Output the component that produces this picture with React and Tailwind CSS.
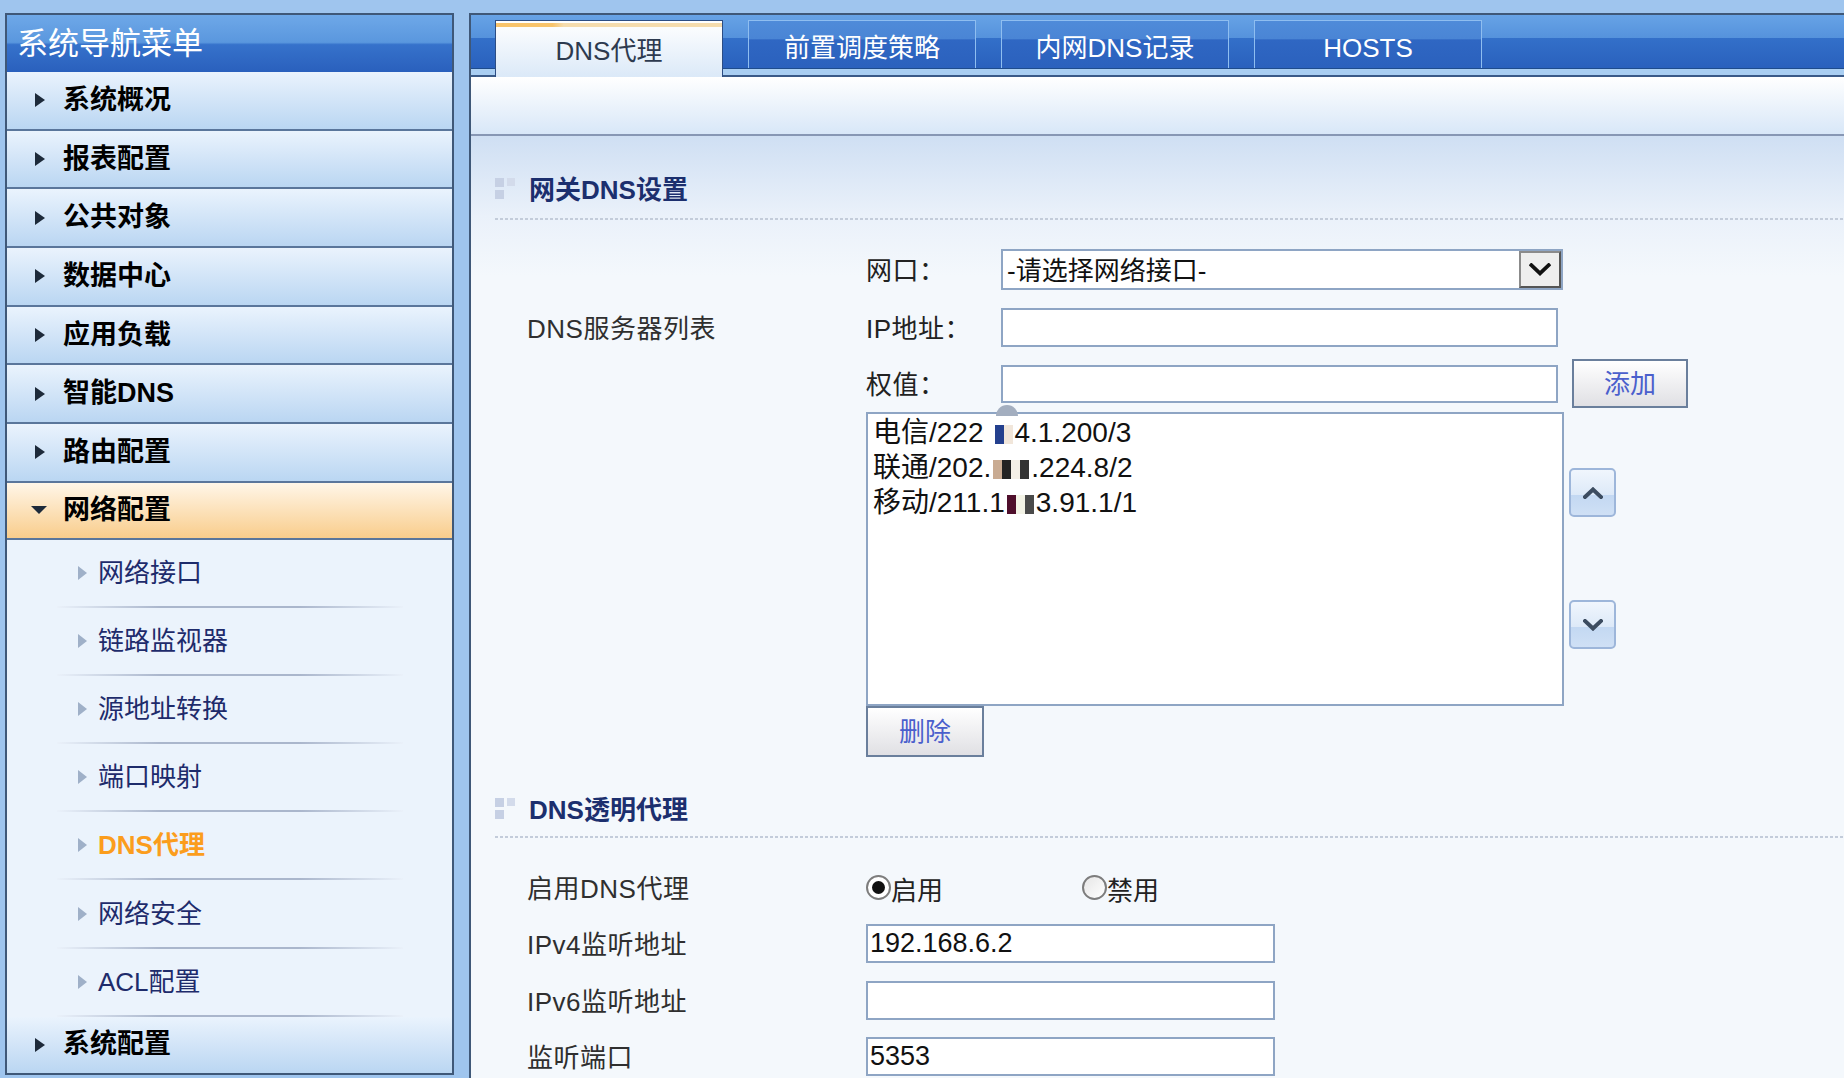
const topMenus = ['系统概况', '报表配置', '公共对象', '数据中心', '应用负载', '智能DNS', '路由配置'];
const subMenus = ['网络接口', '链路监视器', '源地址转换', '端口映射', 'DNS代理', '网络安全', 'ACL配置'];
const tabs = ['DNS代理', '前置调度策略', '内网DNS记录', 'HOSTS'];

const RightArrow = ({ light }) => (
    <span
        className={
            light
                ? 'w-0 h-0 border-y-[7px] border-y-transparent border-l-[9px] border-l-[#9fb0c8]'
                : 'w-0 h-0 border-y-[7px] border-y-transparent border-l-[10px] border-l-[#1d2a3a]'
        }
    />
);

const Mosaic = ({ cells }) => (
    <span className="inline-flex items-center h-[22px] mx-[2px] align-middle">
        {cells.map((c, i) => (
            <span key={i} className={`inline-block w-[9px] h-[19px] ${c}`} />
        ))}
    </span>
);

const Chevron = ({ up, color = '#3c4c60', w = 20, h = 12, sw = 4 }) => (
    <svg width={w} height={h} viewBox="0 0 20 12">
        <path
            d={up ? 'M2 10 L10 2.5 L18 10' : 'M2 2 L10 9.5 L18 2'}
            fill="none"
            stroke={color}
            strokeWidth={sw}
            strokeLinecap="square"
            strokeLinejoin="miter"
        />
    </svg>
);

const SectionTitle = ({ children }) => (
    <div className="flex items-center h-[40px] gap-[13px]">
        <div className="grid grid-cols-2 gap-[3px] w-[21px]">
            <span className="w-[9px] h-[9px] bg-[#c6d0e4]" />
            <span className="w-[8px] h-[8px] bg-[#d3dbeb]" />
            <span className="w-[9px] h-[9px] bg-[#c6d0e4]" />
        </div>
        <span className="text-[26px] font-bold text-[#1c2f6e] leading-none pt-[3px]">{children}</span>
    </div>
);

const Dashed = () => (
    <div className="h-[2px] bg-[repeating-linear-gradient(to_right,#c3ccda_0px,#c3ccda_3px,transparent_3px,transparent_5px)]" />
);

const TextBox = ({ className, value }) => (
    <div
        className={`bg-white border-2 border-[#8ea5c4] flex items-center pl-[2px] text-[27px] text-[#111] leading-none ${className}`}
    >
        {value}
    </div>
);

const Label = ({ className = '', children }) => (
    <div className={`text-[26px] tracking-[0.5px] leading-none pt-[3px] ${className}`}>{children}</div>
);

const Sidebar = () => (
    <div className="w-[449px] h-[1062px] shrink-0 border-2 border-[#3f5878] bg-[#ebf3fc] flex flex-col">
        <div className="h-[57px] shrink-0 flex items-center pl-[10px] bg-[linear-gradient(to_bottom,#6ea8e8_0%,#5a97de_48%,#3672cb_52%,#2a60bd_100%)]">
            <span className="text-[31px] text-white leading-none">系统导航菜单</span>
        </div>
        {topMenus.map((m) => (
            <div
                key={m}
                className="h-[58.7px] shrink-0 flex items-center gap-[18px] pl-[28px] border-b-2 border-[#5a769b] bg-[linear-gradient(to_bottom,#eaf3fd,#bad6f2)]"
            >
                <RightArrow />
                <span className="text-[27px] font-bold text-black leading-none">{m}</span>
            </div>
        ))}
        <div className="h-[57px] shrink-0 flex items-center gap-[16px] pl-[24px] border-b-2 border-[#5a769b] bg-[linear-gradient(to_bottom,#fff6e8,#f9cd8c)]">
            <span className="w-0 h-0 border-x-[8px] border-x-transparent border-t-[8px] border-t-[#1d2a3a]" />
            <span className="text-[27px] font-bold text-black leading-none">网络配置</span>
        </div>
        {subMenus.map((s) => (
            <div key={s} className="h-[68.14px] shrink-0 flex flex-col">
                <div className="flex-1 flex items-center gap-[11px] pl-[71px]">
                    <RightArrow light />
                    <span
                        className={
                            s === 'DNS代理'
                                ? 'text-[26px] font-bold text-[#fb9d1d] leading-none'
                                : 'text-[26px] text-[#1e2b6b] leading-none'
                        }
                    >
                        {s}
                    </span>
                </div>
                <div className="ml-[50px] w-[346px] h-[2px] bg-[linear-gradient(to_right,#eaf1fa,#aab6cc_30%,#aab6cc_70%,#eaf1fa)]" />
            </div>
        ))}
        <div className="h-[56px] shrink-0 flex items-center gap-[18px] pl-[28px] bg-[linear-gradient(to_bottom,#eaf3fd,#bad6f2)]">
            <RightArrow />
            <span className="text-[27px] font-bold text-black leading-none">系统配置</span>
        </div>
    </div>
);

const TabBar = () => (
    <div className="h-[62px] shrink-0 border-b-2 border-[#3a5a88] bg-[linear-gradient(to_bottom,#67a3e6_0px,#5592dc_23px,#3370c9_23px,#2a61bd_53px,#1f4c8c_53px,#1f4c8c_54px,#a9cef2_54px,#a9cef2_62px)] flex items-start pl-[24px] pt-[5px] gap-[25px]">
        {tabs.map((t, i) =>
            i === 0 ? (
                <div
                    key={t}
                    className="w-[228px] h-[57px] border-t border-x border-[#2c4d84] bg-[linear-gradient(to_bottom,#ffffff,#dbe9f8)] flex flex-col"
                >
                    <div className="mt-[2px] h-[4px] bg-[linear-gradient(to_right,#f8c46c_0%,#f8c46c_25%,#f5dcae_30%,#f5dcae_100%)]" />
                    <div className="flex-1 flex items-center justify-center text-[26px] text-[#2d3a4f] leading-none pb-[3px]">
                        {t}
                    </div>
                </div>
            ) : (
                <div
                    key={t}
                    className="w-[228px] h-[48px] border-t border-x border-[#8fbef0] bg-[linear-gradient(to_bottom,#4f8bd9_0%,#4a85d5_38%,#2f67c3_40%,#2b61bd_100%)] flex items-center justify-center pt-[7px] text-[26px] text-white leading-none"
                >
                    {t}
                </div>
            )
        )}
    </div>
);

const Main = () => (
    <div className="flex-1 h-[1065px] border-l-2 border-t-2 border-[#3f5878] flex flex-col">
        <TabBar />
        <div className="h-[59px] shrink-0 border-b-2 border-[#8797b4] bg-[linear-gradient(to_bottom,#ffffff,#d8e7f8)]" />
        <div className="flex-1 pl-[24px] pt-[32px] bg-[linear-gradient(to_bottom,#cfdff3_0px,#eaf1fa_80px,#f4f8fc_140px)] text-[#2f2f2f]">
            <SectionTitle>网关DNS设置</SectionTitle>
            <div className="mt-[10px]">
                <Dashed />
            </div>

            <div className="pl-[32px]">
                <div className="mt-[29px] flex items-center h-[41px]">
                    <div className="w-[339px]" />
                    <Label className="w-[135px] text-[#222]">网口：</Label>
                    <div className="w-[562px] h-[41px] bg-white border-2 border-[#8ea5c4] flex items-center">
                        <span className="flex-1 pl-[4px] pt-[2px] text-[26px] text-[#111] leading-none">-请选择网络接口-</span>
                        <div className="w-[42px] h-full bg-[#eeeeee] border-2 border-[#8b8b8b] border-r-[#555] border-b-[#555] flex items-center justify-center">
                            <Chevron color="#111" w={22} h={13} sw={3.5} />
                        </div>
                    </div>
                </div>

                <div className="mt-[18px] flex items-center h-[39px]">
                    <Label className="w-[339px]">DNS服务器列表</Label>
                    <Label className="w-[135px] text-[#222]">IP地址：</Label>
                    <TextBox className="w-[557px] h-[39px]" />
                </div>

                <div className="mt-[12px] flex items-center h-[49px]">
                    <div className="w-[339px]" />
                    <Label className="w-[135px] text-[#222]">权值：</Label>
                    <TextBox className="w-[557px] h-[38px]" />
                    <button className="ml-[14px] w-[116px] h-[49px] border-2 border-[#6a7f9c] bg-[linear-gradient(to_bottom,#ffffff,#e0e0e4)] text-[26px] text-[#4a5fcc] leading-none">
                        添加
                    </button>
                </div>

                <div className="mt-[4px] flex items-start">
                    <div className="w-[339px]" />
                    <div className="relative w-[698px] h-[294px] bg-white border-2 border-[#8ea5c4] pl-[5px] pt-[1px] text-[28px] text-[#111] leading-[35px]">
                        <span className="absolute left-[128px] -top-[9px] w-[22px] h-[11px] rounded-t-full bg-[#a3aebf]" />
                        <div>
                            电信/222
                            <Mosaic cells={['bg-white', 'bg-[#24408e]', 'bg-[#f1e6da]']} />
                            4.1.200/3
                        </div>
                        <div>
                            联通/202.
                            <Mosaic cells={['bg-[#c9ab92]', 'bg-[#222]', 'bg-[#f4efe6]', 'bg-[#333]']} />
                            .224.8/2
                        </div>
                        <div>
                            移动/211.1
                            <Mosaic cells={['bg-[#4f0f2c]', 'bg-[#f3f3e6]', 'bg-[#4a4a4a]']} />
                            3.91.1/1
                        </div>
                    </div>
                    <div className="ml-[5px] w-[47px] flex flex-col">
                        <button className="mt-[56px] h-[49px] rounded-[5px] border-2 border-[#9db6da] bg-[linear-gradient(to_bottom,#f0f6fd_0%,#dde9f8_55%,#c3d8f2_56%,#cfe0f5_100%)] flex items-center justify-center">
                            <Chevron up />
                        </button>
                        <button className="mt-[83px] h-[49px] rounded-[5px] border-2 border-[#9db6da] bg-[linear-gradient(to_bottom,#f0f6fd_0%,#dde9f8_55%,#c3d8f2_56%,#cfe0f5_100%)] flex items-center justify-center">
                            <Chevron />
                        </button>
                    </div>
                </div>

                <button className="ml-[339px] w-[118px] h-[51px] border-2 border-[#6a7f9c] bg-[linear-gradient(to_bottom,#ffffff,#e0e0e4)] text-[26px] text-[#4a5fcc] leading-none">
                    删除
                </button>
            </div>

            <div className="mt-[31px]">
                <SectionTitle>DNS透明代理</SectionTitle>
            </div>
            <div className="mt-[8px]">
                <Dashed />
            </div>

            <div className="pl-[32px]">
                <div className="mt-[29px] flex items-center h-[40px]">
                    <Label className="w-[339px]">启用DNS代理</Label>
                    <div className="w-[216px] flex items-center">
                        <span className="w-[25px] h-[25px] rounded-full border-2 border-[#7d7d7d] bg-white flex items-center justify-center">
                            <span className="w-[13px] h-[13px] rounded-full bg-[#111]" />
                        </span>
                        <span className="text-[26px] leading-none text-[#222] pt-[7px]">启用</span>
                    </div>
                    <div className="flex items-center">
                        <span className="w-[25px] h-[25px] rounded-full border-2 border-[#7d7d7d] bg-[linear-gradient(to_bottom_right,#e6e6e6,#ffffff)]" />
                        <span className="text-[26px] leading-none text-[#222] pt-[7px]">禁用</span>
                    </div>
                </div>

                <div className="mt-[17px] flex items-center h-[39px]">
                    <Label className="w-[339px]">IPv4监听地址</Label>
                    <TextBox className="w-[409px] h-[39px]" value="192.168.6.2" />
                </div>
                <div className="mt-[18px] flex items-center h-[39px]">
                    <Label className="w-[339px]">IPv6监听地址</Label>
                    <TextBox className="w-[409px] h-[39px]" />
                </div>
                <div className="mt-[17px] flex items-center h-[39px]">
                    <Label className="w-[339px]">监听端口</Label>
                    <TextBox className="w-[409px] h-[39px]" value="5353" />
                </div>
            </div>
        </div>
    </div>
);

export default function App() {
    return (
        <div className="w-[1844px] h-[1078px] overflow-hidden bg-[#9fc5ee] flex items-start pt-[13px] pl-[5px] gap-[15px] font-['Liberation_Sans','Noto_Sans_CJK_SC',sans-serif]">
            <Sidebar />
            <Main />
        </div>
    );
}
